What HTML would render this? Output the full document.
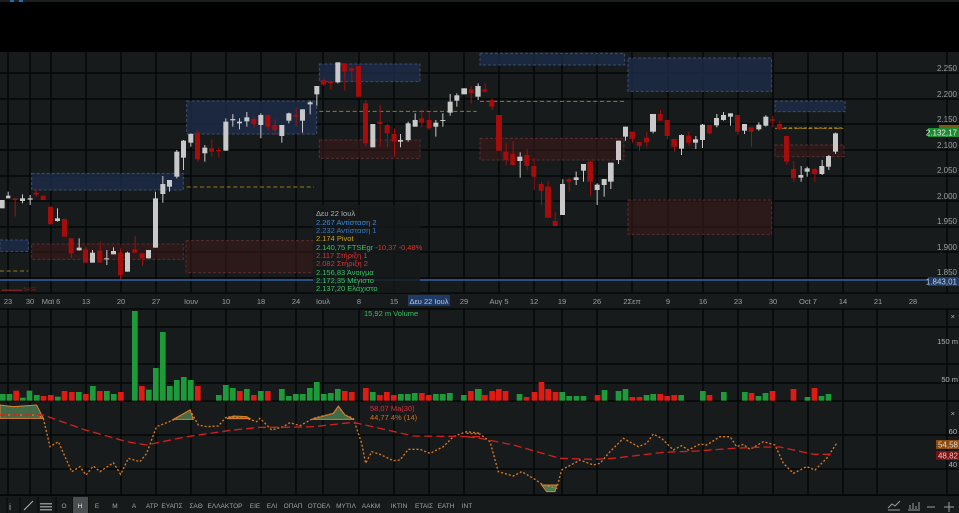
<!DOCTYPE html>
<html><head><meta charset="utf-8"><style>
html,body{margin:0;padding:0;background:#171b1c;width:959px;height:513px;overflow:hidden;font-family:"Liberation Sans","DejaVu Sans",sans-serif}
svg{position:absolute;left:0;top:0}
text{font-family:"Liberation Sans","DejaVu Sans",sans-serif}
</style></head><body>
<svg width="959" height="513" viewBox="0 0 959 513" xmlns="http://www.w3.org/2000/svg">
<rect x="0" y="0" width="959" height="513" fill="#171b1c"/>
<rect x="0" y="0" width="959" height="52" fill="#000"/>
<rect x="0" y="0" width="959" height="2" fill="#1a1f21"/>
<rect x="10" y="0" width="4" height="2" fill="#1f6fb0"/><rect x="19" y="0" width="4" height="2" fill="#1f6fb0"/>

<!-- grid -->
<g stroke="#050707" stroke-width="1.5">
<line x1="0" y1="73" x2="959" y2="73"/><line x1="0" y1="99" x2="959" y2="99"/><line x1="0" y1="124" x2="959" y2="124"/><line x1="0" y1="150" x2="959" y2="150"/><line x1="0" y1="176" x2="959" y2="176"/><line x1="0" y1="201" x2="959" y2="201"/><line x1="0" y1="227" x2="959" y2="227"/><line x1="0" y1="252" x2="959" y2="252"/><line x1="0" y1="278" x2="959" y2="278"/>
<line x1="0" y1="293" x2="959" y2="293"/><line x1="0" y1="309" x2="959" y2="309"/>
<line x1="0" y1="327" x2="959" y2="327"/><line x1="0" y1="364" x2="959" y2="364"/><line x1="0" y1="383" x2="959" y2="383"/><line x1="0" y1="401" x2="959" y2="401"/>
<line x1="0" y1="435" x2="959" y2="435"/><line x1="0" y1="469" x2="959" y2="469"/><line x1="0" y1="495" x2="959" y2="495"/>
</g>
<g stroke="#050707" stroke-width="1.5">
<line x1="8" y1="52" x2="8" y2="293"/><line x1="30" y1="52" x2="30" y2="293"/><line x1="51" y1="52" x2="51" y2="293"/><line x1="86" y1="52" x2="86" y2="293"/><line x1="121" y1="52" x2="121" y2="293"/><line x1="156" y1="52" x2="156" y2="293"/><line x1="191" y1="52" x2="191" y2="293"/><line x1="226" y1="52" x2="226" y2="293"/><line x1="261" y1="52" x2="261" y2="293"/><line x1="296" y1="52" x2="296" y2="293"/><line x1="323" y1="52" x2="323" y2="293"/><line x1="359" y1="52" x2="359" y2="293"/><line x1="394" y1="52" x2="394" y2="293"/><line x1="429" y1="52" x2="429" y2="293"/><line x1="464" y1="52" x2="464" y2="293"/><line x1="499" y1="52" x2="499" y2="293"/><line x1="534" y1="52" x2="534" y2="293"/><line x1="562" y1="52" x2="562" y2="293"/><line x1="597" y1="52" x2="597" y2="293"/><line x1="632" y1="52" x2="632" y2="293"/><line x1="668" y1="52" x2="668" y2="293"/><line x1="703" y1="52" x2="703" y2="293"/><line x1="738" y1="52" x2="738" y2="293"/><line x1="773" y1="52" x2="773" y2="293"/><line x1="808" y1="52" x2="808" y2="293"/><line x1="843" y1="52" x2="843" y2="293"/><line x1="877" y1="52" x2="877" y2="293"/><line x1="947" y1="52" x2="947" y2="293"/>
</g>
<g stroke="#050707" stroke-width="1.5">
<line x1="8" y1="309" x2="8" y2="495"/><line x1="30" y1="309" x2="30" y2="495"/><line x1="51" y1="309" x2="51" y2="495"/><line x1="86" y1="309" x2="86" y2="495"/><line x1="121" y1="309" x2="121" y2="495"/><line x1="156" y1="309" x2="156" y2="495"/><line x1="191" y1="309" x2="191" y2="495"/><line x1="226" y1="309" x2="226" y2="495"/><line x1="261" y1="309" x2="261" y2="495"/><line x1="296" y1="309" x2="296" y2="495"/><line x1="323" y1="309" x2="323" y2="495"/><line x1="359" y1="309" x2="359" y2="495"/><line x1="394" y1="309" x2="394" y2="495"/><line x1="429" y1="309" x2="429" y2="495"/><line x1="464" y1="309" x2="464" y2="495"/><line x1="534" y1="309" x2="534" y2="495"/><line x1="562" y1="309" x2="562" y2="495"/><line x1="597" y1="309" x2="597" y2="495"/><line x1="668" y1="309" x2="668" y2="495"/><line x1="703" y1="309" x2="703" y2="495"/><line x1="738" y1="309" x2="738" y2="495"/><line x1="773" y1="309" x2="773" y2="495"/><line x1="808" y1="309" x2="808" y2="495"/><line x1="843" y1="309" x2="843" y2="495"/><line x1="877" y1="309" x2="877" y2="495"/><line x1="947" y1="309" x2="947" y2="495"/>
</g>

<!-- zones left half (zoom units) -->
<g transform="translate(0,50) scale(0.33333)">
<g fill="#1c2a45" fill-opacity="0.85" stroke="#3a4d70" stroke-width="3" stroke-dasharray="9,6">
<rect x="95" y="370" width="455" height="50"/><rect x="560" y="153" width="390" height="99"/><rect x="958" y="42" width="302" height="53"/><rect x="0" y="570" width="85" height="35"/>
</g>
<g fill="#3a1a1a" fill-opacity="0.6" stroke="#5a2c2c" stroke-width="3" stroke-dasharray="9,6">
<rect x="95" y="582" width="455" height="46"/><rect x="558" y="572" width="387" height="96"/><rect x="958" y="270" width="302" height="55"/>
</g>
<g stroke="#9a7a1a" stroke-width="3" stroke-dasharray="12,8">
<line x1="0" y1="663" x2="85" y2="663"/><line x1="560" y1="411" x2="942" y2="411"/><line x1="958" y1="184" x2="1260" y2="184"/>
</g>
</g>
<g transform="translate(420,50) scale(0.33333)">
<g fill="#1c2a45" fill-opacity="0.85" stroke="#3a4d70" stroke-width="3" stroke-dasharray="9,6">
<rect x="180" y="10" width="434" height="35"/><rect x="624" y="24" width="431" height="100"/><rect x="1065" y="153" width="210" height="32"/>
</g>
<g fill="#3a1a1a" fill-opacity="0.6" stroke="#5a2c2c" stroke-width="3" stroke-dasharray="9,6">
<rect x="180" y="265" width="432" height="65"/><rect x="624" y="450" width="431" height="103"/><rect x="1065" y="285" width="207" height="35"/>
</g>
<g stroke="#9a7a1a" stroke-width="3" stroke-dasharray="12,8">
<line x1="0" y1="184" x2="170" y2="184"/><line x1="180" y1="154" x2="612" y2="154"/><line x1="1065" y1="235" x2="1270" y2="235"/>
</g>
</g>
<line x1="0" y1="280" x2="947" y2="280" stroke="#3a6ec0" stroke-width="1.2"/>
<line x1="779" y1="128" x2="843" y2="128" stroke="#c89a1a" stroke-width="1" stroke-dasharray="3,2"/>

<!-- candles (zoom units, wick w3, body w15) -->
<g transform="translate(0,50) scale(0.33333)">
<g fill="#c9c9c9">
<rect x="-1" y="450" width="15" height="25"/><rect x="23" y="425" width="3" height="20"/><rect x="18" y="437" width="13" height="8"/>
<rect x="66" y="433" width="3" height="27"/><rect x="60" y="445" width="15" height="8"/>
<rect x="89" y="435" width="3" height="30"/><rect x="83" y="445" width="15" height="4"/>
<rect x="171" y="475" width="3" height="40"/><rect x="165" y="505" width="15" height="8"/>
<rect x="236" y="565" width="3" height="37"/><rect x="230" y="593" width="15" height="8"/>
<rect x="276" y="600" width="3" height="38"/><rect x="270" y="608" width="15" height="30"/>
<rect x="319" y="600" width="3" height="45"/><rect x="312" y="625" width="15" height="3"/>
<rect x="339" y="592" width="3" height="21"/><rect x="333" y="603" width="15" height="10"/>
<rect x="381" y="605" width="3" height="60"/><rect x="375" y="608" width="15" height="57"/>
<rect x="444" y="600" width="3" height="25"/><rect x="438" y="600" width="15" height="25"/>
<rect x="465" y="425" width="3" height="168"/><rect x="459" y="445" width="15" height="148"/>
<rect x="487" y="378" width="3" height="80"/><rect x="481" y="402" width="15" height="30"/>
<rect x="507" y="390" width="3" height="35"/><rect x="501" y="390" width="15" height="20"/>
<rect x="529" y="300" width="3" height="85"/><rect x="523" y="305" width="15" height="75"/>
<rect x="549" y="270" width="3" height="90"/><rect x="543" y="272" width="15" height="51"/>
<rect x="571" y="250" width="3" height="40"/><rect x="565" y="252" width="15" height="26"/>
<rect x="613" y="285" width="3" height="50"/><rect x="607" y="293" width="15" height="17"/>
<rect x="676" y="205" width="3" height="97"/><rect x="670" y="215" width="15" height="87"/>
<rect x="697" y="192" width="3" height="38"/><rect x="691" y="207" width="15" height="4"/>
<rect x="717" y="205" width="3" height="33"/><rect x="711" y="215" width="15" height="5"/>
<rect x="739" y="186" width="3" height="44"/><rect x="733" y="202" width="15" height="12"/>
<rect x="781" y="190" width="3" height="75"/><rect x="775" y="195" width="15" height="30"/>
<rect x="844" y="225" width="3" height="53"/><rect x="838" y="225" width="15" height="33"/>
<rect x="865" y="188" width="3" height="32"/><rect x="859" y="190" width="15" height="22"/>
<rect x="906" y="178" width="3" height="70"/><rect x="900" y="178" width="15" height="34"/>
<rect x="929" y="152" width="3" height="41"/><rect x="923" y="157" width="15" height="6"/>
<rect x="949" y="108" width="3" height="59"/><rect x="943" y="108" width="15" height="25"/>
<rect x="1012" y="37" width="3" height="63"/><rect x="1006" y="37" width="15" height="60"/>
<rect x="1117" y="222" width="3" height="70"/><rect x="1111" y="222" width="15" height="70"/>
<rect x="1200" y="252" width="3" height="40"/><rect x="1194" y="270" width="15" height="5"/>
<rect x="1223" y="215" width="3" height="60"/><rect x="1217" y="220" width="15" height="50"/>
<rect x="1244" y="190" width="3" height="40"/><rect x="1238" y="210" width="15" height="20"/>
</g>
<g fill="#a50d0d">
<rect x="44" y="445" width="3" height="55"/><rect x="38" y="445" width="15" height="5"/>
<rect x="107" y="420" width="3" height="20"/><rect x="101" y="428" width="15" height="6"/>
<rect x="128" y="437" width="3" height="13"/><rect x="122" y="437" width="15" height="13"/>
<rect x="151" y="470" width="3" height="55"/><rect x="144" y="470" width="15" height="52"/>
<rect x="193" y="507" width="3" height="53"/><rect x="186" y="507" width="15" height="53"/>
<rect x="213" y="565" width="3" height="60"/><rect x="206" y="565" width="15" height="45"/>
<rect x="256" y="590" width="3" height="48"/><rect x="249" y="598" width="15" height="40"/>
<rect x="299" y="575" width="3" height="63"/><rect x="292" y="602" width="15" height="36"/>
<rect x="360" y="595" width="3" height="93"/><rect x="354" y="608" width="15" height="67"/>
<rect x="404" y="558" width="3" height="50"/><rect x="397" y="598" width="15" height="10"/>
<rect x="426" y="608" width="3" height="40"/><rect x="419" y="610" width="15" height="15"/>
<rect x="592" y="240" width="3" height="95"/><rect x="585" y="248" width="15" height="80"/>
<rect x="634" y="268" width="3" height="52"/><rect x="627" y="295" width="15" height="10"/>
<rect x="655" y="292" width="3" height="30"/><rect x="648" y="300" width="15" height="4"/>
<rect x="761" y="200" width="3" height="32"/><rect x="754" y="207" width="15" height="15"/>
<rect x="803" y="194" width="3" height="48"/><rect x="796" y="195" width="15" height="35"/>
<rect x="824" y="208" width="3" height="47"/><rect x="817" y="225" width="15" height="15"/>
<rect x="887" y="172" width="3" height="56"/><rect x="880" y="195" width="15" height="5"/>
<rect x="970" y="82" width="3" height="26"/><rect x="963" y="90" width="15" height="14"/>
<rect x="991" y="94" width="3" height="24"/><rect x="984" y="94" width="15" height="6"/>
<rect x="1033" y="40" width="3" height="82"/><rect x="1026" y="40" width="15" height="25"/>
<rect x="1054" y="52" width="3" height="43"/><rect x="1047" y="55" width="15" height="7"/>
<rect x="1075" y="48" width="3" height="94"/><rect x="1068" y="48" width="15" height="92"/>
<rect x="1096" y="150" width="3" height="140"/><rect x="1089" y="160" width="15" height="120"/>
<rect x="1139" y="165" width="3" height="125"/><rect x="1132" y="215" width="15" height="7"/>
<rect x="1161" y="222" width="3" height="70"/><rect x="1154" y="225" width="15" height="25"/>
<rect x="1182" y="235" width="3" height="85"/><rect x="1175" y="252" width="15" height="23"/>
</g>
</g>
<g transform="translate(420,50) scale(0.33333)">
<g fill="#c9c9c9">
<rect x="46" y="210" width="3" height="50"/><rect x="40" y="218" width="15" height="12"/>
<rect x="67" y="190" width="3" height="40"/><rect x="61" y="210" width="15" height="3"/>
<rect x="89" y="132" width="3" height="65"/><rect x="83" y="155" width="15" height="33"/>
<rect x="109" y="130" width="3" height="40"/><rect x="103" y="136" width="15" height="16"/>
<rect x="131" y="115" width="3" height="18"/><rect x="124" y="115" width="17" height="18"/>
<rect x="173" y="100" width="3" height="50"/><rect x="166" y="108" width="16" height="32"/>
<rect x="299" y="307" width="3" height="76"/><rect x="292" y="320" width="15" height="13"/>
<rect x="467" y="365" width="3" height="40"/><rect x="461" y="382" width="15" height="8"/>
<rect x="489" y="342" width="3" height="53"/><rect x="483" y="342" width="15" height="20"/>
<rect x="530" y="400" width="3" height="65"/><rect x="524" y="404" width="15" height="16"/>
<rect x="551" y="387" width="3" height="53"/><rect x="545" y="387" width="15" height="18"/>
<rect x="571" y="338" width="3" height="79"/><rect x="564" y="338" width="17" height="57"/>
<rect x="594" y="272" width="3" height="70"/><rect x="588" y="272" width="15" height="58"/>
<rect x="615" y="230" width="3" height="42"/><rect x="609" y="230" width="15" height="30"/>
<rect x="427" y="388" width="3" height="107"/><rect x="420" y="402" width="15" height="93"/>
<rect x="698" y="192" width="3" height="58"/><rect x="690" y="192" width="18" height="53"/>
<rect x="783" y="253" width="3" height="62"/><rect x="777" y="255" width="15" height="41"/>
<rect x="826" y="258" width="3" height="39"/><rect x="819" y="268" width="15" height="10"/>
<rect x="846" y="222" width="3" height="72"/><rect x="840" y="224" width="15" height="46"/>
<rect x="889" y="192" width="3" height="40"/><rect x="882" y="204" width="15" height="22"/>
<rect x="909" y="186" width="3" height="26"/><rect x="903" y="195" width="15" height="15"/>
<rect x="930" y="190" width="3" height="37"/><rect x="924" y="190" width="15" height="10"/>
<rect x="972" y="222" width="3" height="30"/><rect x="966" y="222" width="15" height="20"/>
<rect x="1015" y="217" width="3" height="25"/><rect x="1009" y="224" width="15" height="14"/>
<rect x="1036" y="196" width="3" height="34"/><rect x="1030" y="200" width="15" height="27"/>
<rect x="1142" y="348" width="3" height="47"/><rect x="1135" y="375" width="15" height="8"/>
<rect x="1160" y="350" width="3" height="30"/><rect x="1154" y="355" width="15" height="10"/>
<rect x="1205" y="330" width="3" height="45"/><rect x="1198" y="348" width="15" height="24"/>
<rect x="1225" y="315" width="3" height="45"/><rect x="1218" y="318" width="15" height="32"/>
<rect x="1245" y="248" width="3" height="64"/><rect x="1239" y="250" width="15" height="55"/>
</g>
<g fill="#a50d0d">
<rect x="4" y="180" width="3" height="52"/><rect x="-3" y="205" width="15" height="13"/>
<rect x="26" y="185" width="3" height="55"/><rect x="20" y="210" width="15" height="25"/>
<rect x="152" y="108" width="3" height="52"/><rect x="146" y="118" width="15" height="12"/>
<rect x="194" y="100" width="3" height="28"/><rect x="187" y="118" width="15" height="7"/>
<rect x="215" y="145" width="3" height="35"/><rect x="208" y="150" width="15" height="20"/>
<rect x="228" y="195" width="18" height="107"/>
<rect x="257" y="280" width="3" height="65"/><rect x="250" y="305" width="15" height="25"/>
<rect x="278" y="273" width="3" height="72"/><rect x="271" y="312" width="15" height="33"/>
<rect x="320" y="297" width="3" height="63"/><rect x="313" y="315" width="15" height="33"/>
<rect x="341" y="325" width="3" height="95"/><rect x="334" y="348" width="15" height="32"/>
<rect x="363" y="395" width="3" height="70"/><rect x="356" y="402" width="15" height="20"/>
<rect x="383" y="393" width="3" height="110"/><rect x="375" y="410" width="18" height="93"/>
<rect x="404" y="487" width="3" height="41"/><rect x="398" y="513" width="15" height="15"/>
<rect x="446" y="385" width="3" height="40"/><rect x="439" y="388" width="15" height="7"/>
<rect x="510" y="332" width="3" height="105"/><rect x="502" y="335" width="17" height="60"/>
<rect x="636" y="245" width="3" height="33"/><rect x="628" y="245" width="17" height="21"/>
<rect x="657" y="276" width="3" height="26"/><rect x="650" y="276" width="15" height="12"/>
<rect x="679" y="246" width="3" height="46"/><rect x="672" y="263" width="15" height="14"/>
<rect x="720" y="180" width="3" height="32"/><rect x="713" y="192" width="15" height="20"/>
<rect x="741" y="210" width="3" height="58"/><rect x="734" y="210" width="15" height="48"/>
<rect x="762" y="267" width="3" height="38"/><rect x="754" y="267" width="17" height="23"/>
<rect x="805" y="245" width="3" height="42"/><rect x="798" y="257" width="15" height="21"/>
<rect x="868" y="224" width="3" height="30"/><rect x="861" y="225" width="15" height="25"/>
<rect x="952" y="195" width="3" height="60"/><rect x="945" y="195" width="15" height="50"/>
<rect x="993" y="232" width="3" height="58"/><rect x="986" y="232" width="15" height="13"/>
<rect x="1057" y="198" width="3" height="34"/><rect x="1050" y="208" width="15" height="4"/>
<rect x="1078" y="213" width="3" height="27"/><rect x="1071" y="222" width="15" height="16"/>
<rect x="1099" y="258" width="3" height="87"/><rect x="1092" y="258" width="15" height="77"/>
<rect x="1120" y="333" width="3" height="62"/><rect x="1113" y="357" width="15" height="28"/>
<rect x="1183" y="353" width="3" height="42"/><rect x="1176" y="357" width="15" height="15"/>
</g>
</g>

<!-- price axis labels -->
<g fill="#9aa0a2" font-size="8" text-anchor="end">
<text x="957" y="71">2.250</text><text x="957" y="97">2.200</text><text x="957" y="122">2.150</text><text x="957" y="148">2.100</text><text x="957" y="173">2.050</text><text x="957" y="199">2.000</text><text x="957" y="224">1.950</text><text x="957" y="250">1.900</text><text x="957" y="275">1.850</text>
</g>
<rect x="939" y="125" width="20" height="6" fill="#7a5a10"/>
<rect x="928" y="128" width="31" height="9" fill="#1e8a32"/>
<text x="957" y="135.5" fill="#e8f0e8" font-size="8" text-anchor="end">2.132,17</text>
<rect x="928" y="277" width="31" height="9" fill="#1e3a66"/>
<text x="957" y="284.5" fill="#c8d0e0" font-size="8" text-anchor="end">1.843,01</text>

<!-- info box -->
<rect x="313" y="205" width="107" height="88" fill="#15191a" fill-opacity="0.8"/>
<g font-size="7.5">
<text x="316" y="216" fill="#b0b4b6">Δευ 22 Ιουλ</text>
<text x="316" y="225" fill="#3a8ae0">2.267 Αντίσταση 2</text>
<text x="316" y="233" fill="#3a78c0">2.232 Αντίσταση 1</text>
<text x="316" y="241" fill="#c8a020">2.174 Pivot</text>
<text x="316" y="250" fill="#3ac060">2.140,75 FTSEgr <tspan fill="#e03030">-10,37 -0,48%</tspan></text>
<text x="316" y="258" fill="#e03030">2.117 Στήριξη 1</text>
<text x="316" y="266" fill="#e03030">2.082 Στήριξη 2</text>
<text x="316" y="275" fill="#3ac060">2.156,83 Άνοιγμα</text>
<text x="316" y="283" fill="#3ac060">2.172,35 Μέγιστο</text>
<text x="316" y="291" fill="#3ac060">2.137,20 Ελάχιστο</text>
</g>
<text x="2" y="291" fill="#7a2020" font-size="5">▬▬▬▬ BASE</text>

<!-- date axis -->
<rect x="408" y="295" width="42" height="11" fill="#1e3a66"/>
<g fill="#9aa0a2" font-size="7.5" text-anchor="middle">
<text x="8" y="304">23</text><text x="30" y="304">30</text><text x="51" y="304">Μαϊ 6</text><text x="86" y="304">13</text><text x="121" y="304">20</text><text x="156" y="304">27</text><text x="191" y="304">Ιουν</text><text x="226" y="304">10</text><text x="261" y="304">18</text><text x="296" y="304">24</text><text x="323" y="304">Ιουλ</text><text x="359" y="304">8</text><text x="394" y="304">15</text><text x="429" y="304" fill="#c0c8d8">Δευ 22 Ιουλ</text><text x="464" y="304">29</text><text x="499" y="304">Αυγ 5</text><text x="534" y="304">12</text><text x="562" y="304">19</text><text x="597" y="304">26</text><text x="632" y="304">2Σεπ</text><text x="668" y="304">9</text><text x="703" y="304">16</text><text x="738" y="304">23</text><text x="773" y="304">30</text><text x="808" y="304">Oct 7</text><text x="843" y="304">14</text><text x="878" y="304">21</text><text x="913" y="304">28</text>
</g>
<text x="364" y="316" fill="#3ac060" font-size="7.5">15,92 m Volume</text>

<!-- volume -->
<g transform="translate(0,290) scale(0.33333)">
<g fill="#1e9a3a">
<rect x="0" y="312" width="17" height="20"/><rect x="20" y="312" width="17" height="20"/><rect x="60" y="323" width="17" height="9"/><rect x="80" y="302" width="17" height="30"/><rect x="102" y="315" width="17" height="17"/><rect x="165" y="320" width="17" height="12"/><rect x="228" y="306" width="17" height="26"/><rect x="270" y="288" width="17" height="44"/><rect x="312" y="303" width="17" height="29"/><rect x="333" y="312" width="17" height="20"/><rect x="396" y="63" width="17" height="269"/><rect x="438" y="299" width="17" height="33"/><rect x="459" y="234" width="17" height="98"/><rect x="480" y="126" width="17" height="206"/><rect x="501" y="288" width="17" height="44"/><rect x="522" y="270" width="17" height="62"/><rect x="543" y="261" width="17" height="71"/><rect x="564" y="270" width="17" height="62"/><rect x="648" y="315" width="17" height="17"/><rect x="669" y="285" width="17" height="47"/><rect x="690" y="294" width="17" height="38"/><rect x="732" y="297" width="17" height="35"/><rect x="774" y="303" width="17" height="29"/><rect x="837" y="297" width="17" height="35"/><rect x="858" y="318" width="17" height="14"/><rect x="879" y="312" width="17" height="20"/><rect x="900" y="312" width="17" height="20"/><rect x="921" y="294" width="17" height="38"/><rect x="942" y="276" width="17" height="56"/><rect x="963" y="312" width="17" height="20"/><rect x="984" y="309" width="17" height="23"/><rect x="1005" y="297" width="17" height="35"/><rect x="1110" y="306" width="17" height="26"/><rect x="1194" y="312" width="17" height="20"/><rect x="1215" y="312" width="17" height="20"/><rect x="1236" y="309" width="17" height="23"/><rect x="1299" y="312" width="17" height="20"/><rect x="1320" y="312" width="17" height="20"/><rect x="1341" y="309" width="17" height="23"/><rect x="1383" y="315" width="17" height="17"/><rect x="1425" y="297" width="17" height="35"/>
</g>
<g fill="#e01b14">
<rect x="40" y="302" width="17" height="30"/><rect x="122" y="318" width="17" height="14"/><rect x="144" y="315" width="17" height="17"/><rect x="185" y="303" width="17" height="29"/><rect x="207" y="306" width="17" height="26"/><rect x="249" y="312" width="17" height="20"/><rect x="291" y="303" width="17" height="29"/><rect x="354" y="306" width="17" height="26"/><rect x="417" y="288" width="17" height="44"/><rect x="585" y="288" width="17" height="44"/><rect x="711" y="303" width="17" height="29"/><rect x="753" y="315" width="17" height="17"/><rect x="795" y="303" width="17" height="29"/><rect x="1026" y="303" width="17" height="29"/><rect x="1047" y="306" width="17" height="26"/><rect x="1089" y="294" width="17" height="38"/><rect x="1131" y="315" width="17" height="17"/><rect x="1152" y="306" width="17" height="26"/><rect x="1173" y="315" width="17" height="17"/><rect x="1257" y="309" width="17" height="23"/><rect x="1278" y="315" width="17" height="17"/><rect x="1404" y="303" width="17" height="29"/>
</g>
</g>
<g transform="translate(480,290) scale(0.33333)">
<g fill="#1e9a3a">
<rect x="-5" y="297" width="10" height="35"/><rect x="110" y="312" width="17" height="20"/><rect x="238" y="306" width="17" height="26"/><rect x="259" y="318" width="17" height="14"/><rect x="281" y="318" width="17" height="14"/><rect x="302" y="318" width="17" height="14"/><rect x="365" y="300" width="17" height="32"/><rect x="407" y="303" width="17" height="29"/><rect x="428" y="297" width="17" height="35"/><rect x="491" y="315" width="17" height="17"/><rect x="511" y="312" width="17" height="20"/><rect x="595" y="315" width="17" height="17"/><rect x="660" y="303" width="17" height="29"/><rect x="723" y="306" width="17" height="26"/><rect x="786" y="306" width="17" height="26"/><rect x="827" y="318" width="17" height="14"/><rect x="848" y="309" width="17" height="23"/><rect x="974" y="321" width="17" height="11"/><rect x="1016" y="318" width="17" height="14"/><rect x="1037" y="312" width="17" height="20"/>
</g>
<g fill="#e01b14">
<rect x="6" y="315" width="17" height="17"/><rect x="28" y="303" width="17" height="29"/><rect x="48" y="297" width="17" height="35"/><rect x="68" y="303" width="17" height="29"/><rect x="131" y="321" width="17" height="11"/><rect x="155" y="306" width="17" height="26"/><rect x="176" y="276" width="17" height="56"/><rect x="196" y="297" width="17" height="35"/><rect x="218" y="306" width="17" height="26"/><rect x="344" y="315" width="17" height="17"/><rect x="448" y="321" width="17" height="11"/><rect x="470" y="321" width="17" height="11"/><rect x="532" y="312" width="17" height="20"/><rect x="553" y="318" width="17" height="14"/><rect x="574" y="315" width="17" height="17"/><rect x="680" y="315" width="17" height="17"/><rect x="806" y="309" width="17" height="23"/><rect x="869" y="303" width="17" height="29"/><rect x="932" y="297" width="17" height="35"/><rect x="995" y="294" width="17" height="38"/>
</g>
</g>
<g fill="#b0b4b6" font-size="7.5" text-anchor="end">
<text x="955" y="319">×</text><text x="958" y="344">150 m</text><text x="958" y="382">50 m</text>
<text x="955" y="416">×</text><text x="957" y="434">60</text><text x="957" y="467">40</text>
</g>

<!-- oscillator -->
<g transform="translate(0,290) scale(0.33333)" fill="none">
<g fill="#4a7a50" fill-opacity="0.85" stroke="#e08030" stroke-width="3">
<polygon points="0,385 0,345 40,350 110,345 130,385"/>
<polygon points="520,388 570,360 580,388"/>
<polygon points="680,386 700,378 740,380 750,386"/>
<polygon points="935,388 1000,370 1015,348 1035,375 1060,388"/>
</g>
<polyline stroke="#e07a20" stroke-width="4" stroke-dasharray="6,6" points="0,375 110,375 130,385 150,470 175,455 215,545 240,530 258,555 280,528 300,545 340,518 362,553 385,505 420,515 440,490 460,435 470,410 520,390 570,360 595,405 620,410 655,408 680,380 740,385 770,395 780,385 815,420 850,410 870,398 900,407 940,385 1000,370 1015,350 1035,375 1060,385 1085,460 1097,520 1115,485 1140,493 1180,512 1200,510 1225,478 1260,478 1290,490 1330,470 1360,440 1400,425 1440,430"/>
<polyline stroke="#d02020" stroke-width="4" stroke-dasharray="24,12" points="0,375 130,375 250,418 380,455 440,465 560,440 700,420 780,412 855,412 940,410 1060,397 1240,438 1440,440"/>
</g>
<g transform="translate(480,290) scale(0.33333)" fill="none">
<polygon points="185,585 230,585 225,605 200,605" fill="#4a7a50" stroke="#e08030" stroke-width="3"/>
<polyline stroke="#e07a20" stroke-width="4" stroke-dasharray="6,6" points="-40,430 0,432 30,455 55,545 100,558 125,545 160,565 190,585 230,595 245,540 300,510 340,525 360,520 390,485 430,445 475,470 500,460 520,432 545,445 580,480 605,467 625,480 660,462 680,465 720,440 750,440 770,470 790,463 810,478 850,455 885,465 910,520 940,550 980,530 1005,540 1040,505 1070,460"/>
<polyline stroke="#d02020" stroke-width="4" stroke-dasharray="24,12" points="-40,440 0,445 100,465 240,505 340,508 400,505 550,487 650,483 760,475 850,471 900,471 1000,493 1055,493"/>
</g>
<text x="370" y="411" fill="#e03040" font-size="7.5">58,07 Ma(30)</text>
<text x="370" y="420" fill="#d07020" font-size="7.5">44,77 4% (14)</text>
<rect x="936" y="440" width="23" height="9" fill="#8a4a10"/><text x="958" y="447.5" fill="#e8d8c8" font-size="8" text-anchor="end">54,58</text>
<rect x="936" y="451" width="23" height="9" fill="#7a1010"/><text x="958" y="458.5" fill="#e8c8c8" font-size="8" text-anchor="end">48,82</text>

<!-- toolbar -->
<rect x="0" y="496" width="959" height="17" fill="#161a1b"/>
<line x1="0" y1="495.5" x2="959" y2="495.5" stroke="#050707"/>
<g stroke="#050707"><line x1="7" y1="497" x2="7" y2="513"/><line x1="20" y1="497" x2="20" y2="513"/><line x1="38" y1="497" x2="38" y2="513"/><line x1="56" y1="497" x2="56" y2="513"/><line x1="73" y1="497" x2="73" y2="513"/><line x1="88" y1="497" x2="88" y2="513"/></g>
<rect x="73" y="497" width="15" height="16" fill="#4a4e50"/>
<text x="9" y="510" fill="#b0b4b6" font-size="9">i</text>
<line x1="24" y1="510" x2="33" y2="501" stroke="#b0b4b6" stroke-width="1"/>
<g fill="#8a8e90"><rect x="40" y="503" width="12" height="1.5"/><rect x="40" y="506" width="12" height="1.5"/><rect x="40" y="509" width="12" height="1.5"/></g>
<g fill="#a0a4a6" font-size="6.5" text-anchor="middle">
<text x="64" y="508">O</text><text x="80" y="508" fill="#e0e0e0">H</text><text x="97" y="508">Ε</text><text x="115" y="508">Μ</text><text x="134" y="508">Α</text><text x="152" y="508">ΑΤΡ</text><text x="172" y="508">ΕΥΑΠΣ</text><text x="196" y="508">ΣΑΘ</text><text x="225" y="508">ΕΛΛΑΚΤΟΡ</text><text x="255" y="508">ΕΙΕ</text><text x="272" y="508">ΕΛΙ</text><text x="293" y="508">ΟΠΑΠ</text><text x="319" y="508">ΟΤΟΕΛ</text><text x="346" y="508">ΜΥΤΙΛ</text><text x="371" y="508">ΑΑΚΜ</text><text x="399" y="508">ΙΚΤΙΝ</text><text x="424" y="508">ΕΤΑΙΣ</text><text x="446" y="508">ΕΑΤΗ</text><text x="467" y="508">ΙΝΤ</text>
</g>
<g stroke="#9a9ea0" stroke-width="1" fill="none">
<polyline points="888,508 892,504 895,506 900,501"/><line x1="888" y1="510" x2="900" y2="510"/>
<line x1="908" y1="510" x2="920" y2="510"/><line x1="910" y1="509" x2="910" y2="505"/><line x1="913" y1="509" x2="913" y2="503"/><line x1="916" y1="509" x2="916" y2="506"/><line x1="919" y1="509" x2="919" y2="502"/>
<line x1="927" y1="507" x2="935" y2="507"/>
<line x1="944" y1="507" x2="954" y2="507"/><line x1="949" y1="502" x2="949" y2="512"/>
</g>
</svg>
</body></html>
